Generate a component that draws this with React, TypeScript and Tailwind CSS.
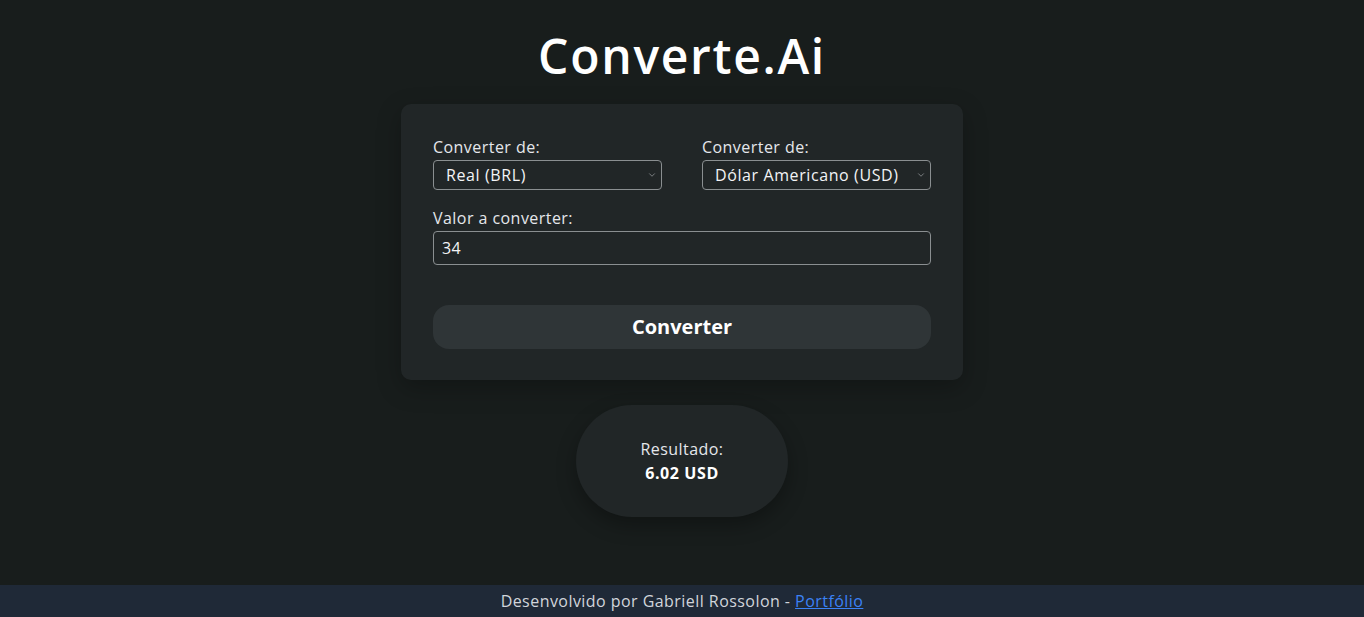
import { ChevronDown } from 'lucide-react';

const font = { fontFamily: '"Open Sans", "Noto Sans", sans-serif' };

function SelectBox({ label, value }: { label: string; value: string }) {
    return (
        <div className="flex flex-col">
            <label className="text-base leading-6 text-[#e5e7eb] mb-[1px] tracking-[0.45px]">{label}</label>
            <div className="relative">
                <select
                    defaultValue={value}
                    className="w-full h-[30px] appearance-none rounded-[4px] border border-[#8a8f91] bg-transparent pl-3 pr-6 text-base tracking-[0.6px] text-[#f3f4f6] outline-none"
                >
                    <option className="bg-[#212627]">{value}</option>
                </select>
                <ChevronDown className="pointer-events-none absolute right-[5px] top-[10px] h-[10px] w-[10px] text-[#8a8f91]" strokeWidth={2} />
            </div>
        </div>
    );
}

export default function App() {
    return (
        <div className="min-h-screen flex flex-col bg-[#181d1c] text-white" style={font}>
            <main className="flex-1 flex flex-col items-center pt-[28px]">
                <h1 className="text-[48px] leading-[56px] font-semibold tracking-[1.7px] mb-5">Converte.Ai</h1>

                {/* Converter card */}
                <div className="w-[562px] rounded-[10px] bg-[#212627] px-8 pt-[31px] pb-[31px] shadow-[0_8px_24px_rgba(0,0,0,0.25)]">
                    <div className="grid grid-cols-2 gap-x-10">
                        <SelectBox label="Converter de:" value="Real (BRL)" />
                        <SelectBox label="Converter de:" value="Dólar Americano (USD)" />
                    </div>

                    <div className="mt-4 flex flex-col">
                        <label className="text-base leading-6 text-[#e5e7eb] mb-[1px] tracking-[0.45px]">Valor a converter:</label>
                        <input
                            defaultValue="34"
                            className="h-[34px] rounded-[4px] border border-[#8a8f91] bg-transparent px-2 text-base tracking-[0.45px] text-[#f3f4f6] outline-none"
                        />
                    </div>

                    <button className="mt-10 h-[44px] w-full rounded-2xl bg-[#2f3537] text-xl font-bold text-white">
                        Converter
                    </button>
                </div>

                {/* Result */}
                <div className="mt-[25px] flex h-[112px] w-[212px] flex-col items-center justify-center rounded-full bg-[#212627] shadow-[0_8px_20px_rgba(0,0,0,0.3)]">
                    <p className="text-base leading-6 text-[#e5e7eb] tracking-[0.45px]">Resultado:</p>
                    <p className="text-base leading-6 font-bold tracking-[0.6px]">6.02 USD</p>
                </div>
            </main>

            <footer className="h-8 bg-[#1f2937] flex items-center justify-center text-base text-[#d1d5db] tracking-[0.45px]">
                Desenvolvido por Gabriell Rossolon -&nbsp;
                <a href="#" className="text-[#3b82f6] underline">Portfólio</a>
            </footer>
        </div>
    );
}
